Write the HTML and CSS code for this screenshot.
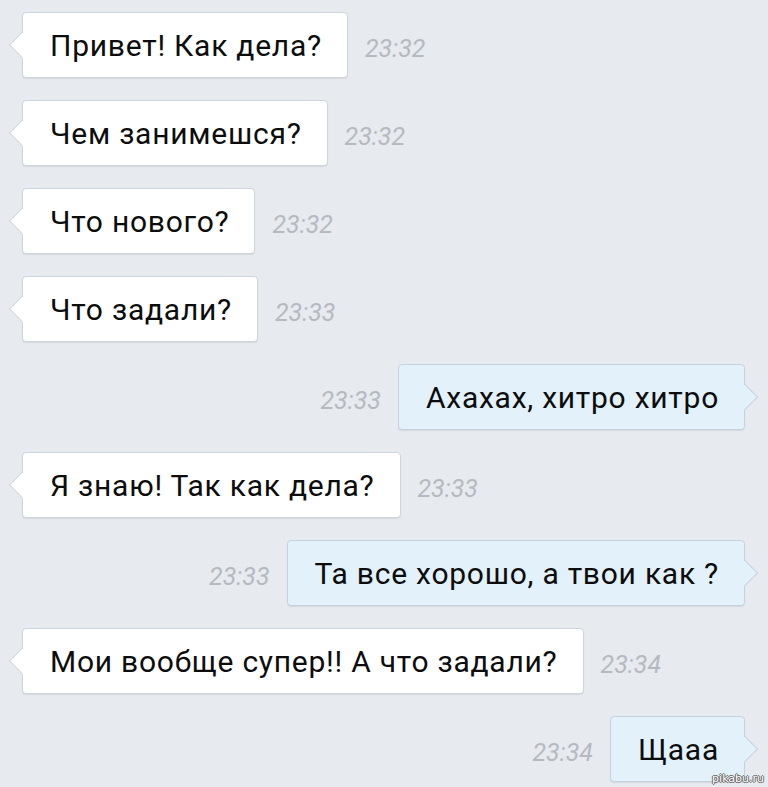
FILE: index.html
```html
<!DOCTYPE html>
<html lang="ru">
<head>
    <meta charset="UTF-8">
    <meta name="viewport" content="width=device-width, initial-scale=1.0">
    <title>Диалог</title>
    <link rel="stylesheet" href="styles.css">
</head>
<body>
    <div class="chat">
        <div class="row in">
            <div class="bubble">Привет! Как дела?</div>
            <span class="time">23:32</span>
        </div>
        <div class="row in">
            <div class="bubble">Чем занимешся?</div>
            <span class="time">23:32</span>
        </div>
        <div class="row in">
            <div class="bubble">Что нового?</div>
            <span class="time">23:32</span>
        </div>
        <div class="row in">
            <div class="bubble">Что задали?</div>
            <span class="time">23:33</span>
        </div>
        <div class="row out">
            <span class="time">23:33</span>
            <div class="bubble">Ахахах, хитро хитро</div>
        </div>
        <div class="row in">
            <div class="bubble">Я знаю! Так как дела?</div>
            <span class="time">23:33</span>
        </div>
        <div class="row out">
            <span class="time">23:33</span>
            <div class="bubble">Та все хорошо, а твои как ?</div>
        </div>
        <div class="row in">
            <div class="bubble">Мои вообще супер!! А что задали?</div>
            <span class="time">23:34</span>
        </div>
        <div class="row out">
            <span class="time">23:34</span>
            <div class="bubble">Щааа</div>
        </div>
    </div>
    <div class="watermark">pikabu.ru</div>
</body>
</html>
```

FILE: styles.css
```css
* {
    margin: 0;
    padding: 0;
    box-sizing: border-box;
}

body {
    font-family: Roboto, 'Noto Sans', sans-serif;
    background: #e7ebf0;
    color: #0d0d0d;
    width: 768px;
    height: 787px;
    overflow: hidden;
    position: relative;
}

.chat {
    display: flex;
    flex-direction: column;
    gap: 22px;
    padding-top: 12px;
}

.row {
    display: flex;
    align-items: center;
    gap: 17px;
}

.row.in {
    padding-left: 22px;
}

.row.out {
    justify-content: flex-end;
    padding-right: 23px;
}

.bubble {
    position: relative;
    height: 66px;
    padding: 0 25px 0 27px;
    display: flex;
    align-items: center;
    font-size: 30px;
    letter-spacing: 0.75px;
    background: #fff;
    border: 1px solid #cfd5dc;
    border-radius: 4px;
    box-shadow: 0 1px 1px rgba(0, 0, 0, 0.08);
}

.bubble::before {
    content: '';
    position: absolute;
    top: 50%;
    width: 18px;
    height: 18px;
    background: inherit;
    border: 1px solid #cfd5dc;
    transform: translateY(-50%) rotate(45deg);
}

.in .bubble::before {
    left: -10px;
    border-top-color: transparent;
    border-right-color: transparent;
}

.out .bubble {
    background: #e3f1fb;
    border-color: #c5d3de;
}

.out .bubble::before {
    right: -10px;
    border-color: #c5d3de;
    border-bottom-color: transparent;
    border-left-color: transparent;
}

.time {
    margin-top: 6px;
    font-size: 25px;
    font-style: italic;
    color: #b5babf;
}

.watermark {
    position: absolute;
    right: 4px;
    bottom: 2px;
    font-family: 'DejaVu Sans', sans-serif;
    font-size: 11px;
    color: #fff;
    text-shadow: -1px 0 #666, 1px 0 #666, 0 -1px #666, 0 1px #666;
}
```
